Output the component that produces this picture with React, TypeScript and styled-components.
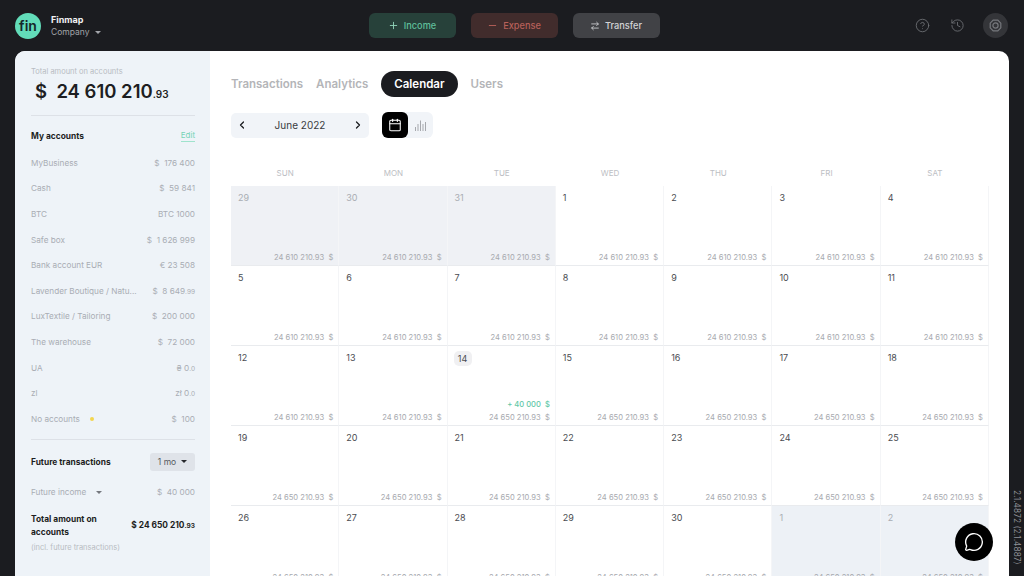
import * as React from 'react';
import styled, { createGlobalStyle } from 'styled-components';
import {
  ArrowRightLeft,
  Calendar as CalendarIcon,
  ChevronLeft,
  ChevronRight,
  CircleHelp,
  History,
  MessageCircle,
  Minus,
  Plus,
} from 'lucide-react';

const GlobalStyle = createGlobalStyle`
  html, body {
    margin: 0;
    padding: 0;
    height: 576px;
    overflow: hidden;
    background: #1b1c20;
    font-family: Inter, "Liberation Sans", sans-serif;
  }
  * { box-sizing: border-box; }
`;

const Page = styled.div`
  position: relative;
  width: 1024px;
  height: 576px;
  overflow: hidden;
  display: flex;
  flex-direction: column;
  background: #1b1c20;
`;

const TopBar = styled.header`
  height: 51px;
  flex: none;
  display: grid;
  grid-template-columns: 1fr auto 1fr;
  align-items: center;
  padding: 0 16px 0 20px;
`;

const Brand = styled.div`
  display: flex;
  align-items: center;
  gap: 10px;
  margin-left: -5px;
`;

const Logo = styled.div`
  width: 26px;
  height: 26px;
  border-radius: 50%;
  background: #62dcb9;
  color: #14262a;
  font-size: 14px;
  font-weight: 600;
  display: flex;
  align-items: center;
  justify-content: center;
`;

const BrandText = styled.div`
  padding-top: 2px;
`;

const BrandName = styled.div`
  color: #f1f1f3;
  font-size: 9px;
  font-weight: 700;
  line-height: 12px;
`;

const BrandCompany = styled.div`
  color: #a2a4a9;
  font-size: 8.5px;
  line-height: 13px;
  display: flex;
  align-items: center;
  gap: 5px;
`;

const Caret = styled.span<{ $color?: string }>`
  width: 0;
  height: 0;
  border-left: 3px solid transparent;
  border-right: 3px solid transparent;
  border-top: 3.5px solid ${(p) => p.$color ?? '#a2a4a9'};
`;

const Actions = styled.div`
  display: flex;
  gap: 15px;
`;

const ActionButton = styled.button<{ $bg: string; $fg: string }>`
  width: 87px;
  height: 25px;
  border: none;
  border-radius: 6px;
  background: ${(p) => p.$bg};
  color: ${(p) => p.$fg};
  font-family: inherit;
  font-size: 9.2px;
  font-weight: 500;
  display: flex;
  align-items: center;
  justify-content: center;
  gap: 5px;
  padding: 0;
`;

const TopIcons = styled.div`
  display: flex;
  align-items: center;
  justify-content: flex-end;
  gap: 20px;
  color: #6e7075;
`;

const Avatar = styled.div`
  width: 25px;
  height: 25px;
  border-radius: 50%;
  background: #343539;
  display: flex;
  align-items: center;
  justify-content: center;
  margin-left: -2px;
`;

const Panel = styled.div`
  flex: 1;
  min-height: 0;
  margin: 0 15px;
  display: flex;
  border-radius: 10px 10px 0 0;
  overflow: hidden;
  background: #fff;
`;

const Sidebar = styled.aside`
  width: 195px;
  flex: none;
  background: #eef3f8;
  padding: 16px 15px 0 16px;
  color: #1d1e22;
`;

const TotalLabel = styled.div`
  color: #b8bcc2;
  font-size: 7.5px;
  line-height: 10px;
`;

const TotalValue = styled.div`
  font-size: 18.5px;
  font-weight: 600;
  line-height: 26px;
  margin: 1px 0 0 4px;
  display: flex;
  align-items: baseline;
  white-space: pre;
`;

const Cents = styled.span<{ $size: number }>`
  font-size: ${(p) => p.$size}px;
`;

const Divider = styled.div<{ $top: number; $bottom: number }>`
  height: 1px;
  background: #dde1e7;
  margin: ${(p) => p.$top}px 0 ${(p) => p.$bottom}px;
`;

const SectionHead = styled.div`
  display: flex;
  align-items: center;
  justify-content: space-between;
  height: 14px;
  margin-bottom: 7px;
`;

const SectionTitle = styled.div`
  font-size: 8.4px;
  font-weight: 700;
`;

const EditLink = styled.span`
  color: #75d3b6;
  font-size: 8px;
  line-height: 11px;
  border-bottom: 1px solid #9fe3cd;
`;

const AccountRow = styled.div`
  height: 25.6px;
  display: flex;
  align-items: center;
  justify-content: space-between;
  color: #a9adb4;
  font-size: 8.2px;
  white-space: nowrap;
`;

const AccountName = styled.span`
  display: flex;
  align-items: center;
  gap: 10px;
`;

const AccountValue = styled.span`
  white-space: pre;
`;

const Dot = styled.span`
  width: 4px;
  height: 4px;
  border-radius: 50%;
  background: #f3d64f;
`;

const Small = styled.span`
  font-size: 6.5px;
`;

const FutureHead = styled.div`
  display: flex;
  align-items: center;
  justify-content: space-between;
  height: 18px;
  margin-bottom: 9px;
`;

const RangeSelect = styled.div`
  width: 45px;
  height: 18px;
  border-radius: 3px;
  background: #dfe3e9;
  color: #55585e;
  font-size: 8.5px;
  display: flex;
  align-items: center;
  justify-content: center;
  gap: 5px;
`;

const GrandTotal = styled.div`
  display: flex;
  justify-content: space-between;
  align-items: center;
  margin-top: 8px;
  font-size: 8.4px;
  font-weight: 700;
  line-height: 13px;
`;

const GrandLabel = styled.div`
  width: 75px;
`;

const GrandValue = styled.div`
  white-space: pre;
`;

const InclNote = styled.div`
  color: #b8bcc2;
  font-size: 7.5px;
  line-height: 10px;
  margin-top: 4px;
`;

const Main = styled.main`
  flex: 1;
  min-width: 0;
  padding: 20px 20px 0 21px;
`;

const Tabs = styled.nav`
  display: flex;
  align-items: center;
  gap: 13px;
  height: 26px;
`;

const Tab = styled.div<{ $active?: boolean }>`
  font-size: 11.5px;
  font-weight: 600;
  color: ${(p) => (p.$active ? '#fff' : '#b4b5b8')};
  background: ${(p) => (p.$active ? '#1b1c20' : 'transparent')};
  height: 26px;
  line-height: 26px;
  border-radius: 13px;
  padding: ${(p) => (p.$active ? '0 13px' : '0')};
`;

const Controls = styled.div`
  display: flex;
  align-items: center;
  gap: 13px;
  margin-top: 15px;
  height: 26px;
`;

const MonthPicker = styled.div`
  width: 138px;
  height: 25px;
  border-radius: 5px;
  background: #f1f4f8;
  color: #3a3c41;
  font-size: 10px;
  display: flex;
  align-items: center;
  justify-content: space-between;
  padding: 0 5px;
`;

const ViewToggle = styled.div`
  display: flex;
  border-radius: 6px;
  background: #f1f4f8;
`;

const ViewButton = styled.div<{ $active?: boolean }>`
  width: ${(p) => (p.$active ? 26 : 25)}px;
  height: 26px;
  border-radius: 6px;
  background: ${(p) => (p.$active ? '#000' : 'transparent')};
  color: ${(p) => (p.$active ? '#fff' : '#a6a8ad')};
  display: flex;
  align-items: center;
  justify-content: center;
`;

const Weekdays = styled.div`
  display: grid;
  grid-template-columns: repeat(7, 1fr);
  width: 758px;
  margin-top: 22px;
  height: 26px;
`;

const Weekday = styled.div`
  color: #bcbec3;
  font-size: 8px;
  text-align: center;
  line-height: 26px;
`;

const Grid = styled.div`
  display: grid;
  grid-template-columns: repeat(7, 1fr);
  grid-auto-rows: 80px;
  width: 758px;
`;

const tones = { current: '#fff', previous: '#eff1f5', next: '#edf1f6' };

const Cell = styled.div<{ $tone: keyof typeof tones }>`
  display: flex;
  flex-direction: column;
  padding: 5px 5px 1px 7px;
  background: ${(p) => tones[p.$tone]};
  border-right: 1px solid #f4f5f7;
  border-bottom: 1px solid #e9ebee;
`;

const DayNumber = styled.div<{ $muted?: boolean; $today?: boolean }>`
  color: ${(p) => (p.$muted ? '#a9adb3' : '#4a4c51')};
  font-size: 9px;
  line-height: ${(p) => (p.$today ? '15px' : '13px')};
  width: ${(p) => (p.$today ? '18px' : 'auto')};
  background: ${(p) => (p.$today ? '#f0f0f2' : 'transparent')};
  border-radius: 5px;
  text-align: ${(p) => (p.$today ? 'center' : 'left')};
  margin: ${(p) => (p.$today ? '0 0 0 -1px' : '0')};
`;

const CellFoot = styled.div`
  margin-top: auto;
  text-align: right;
  font-size: 7.6px;
  line-height: 13px;
  color: #a8aaaf;
  white-space: pre;
`;

const Income = styled.div`
  color: #63c8a8;
  font-weight: 500;
`;

const Version = styled.div`
  position: absolute;
  right: 2px;
  top: 490px;
  writing-mode: vertical-rl;
  color: #8f9196;
  font-size: 8.4px;
  white-space: nowrap;
`;

const ChatButton = styled.div`
  position: absolute;
  left: 955px;
  top: 523px;
  width: 38px;
  height: 38px;
  border-radius: 50%;
  background: #000;
  color: #fff;
  display: flex;
  align-items: center;
  justify-content: center;
`;

const accounts: [string, React.ReactNode][] = [
  ['MyBusiness', '$  176 400'],
  ['Cash', '$  59 841'],
  ['BTC', 'BTC 1000'],
  ['Safe box', '$  1 626 999'],
  ['Bank account EUR', '€ 23 508'],
  ['Lavender Boutique / Natu...', <>$  8 649<Small>.99</Small></>],
  ['LuxTextile / Tailoring', '$  200 000'],
  ['The warehouse', '$  72 000'],
  ['UA', <>₴ 0<Small>.0</Small></>],
  ['zl', <>zł 0<Small>.0</Small></>],
];

type Day = {
  n: number;
  tone: keyof typeof tones;
  today?: boolean;
  income?: string;
  balance: string;
};

const B1 = '24 610 210.93  $';
const B2 = '24 650 210.93  $';

const days: Day[] = [
  ...[29, 30, 31].map((n): Day => ({ n, tone: 'previous', balance: B1 })),
  ...[1, 2, 3, 4, 5, 6, 7, 8, 9, 10, 11, 12, 13].map((n): Day => ({ n, tone: 'current', balance: B1 })),
  { n: 14, tone: 'current', today: true, income: '+ 40 000  $', balance: B2 },
  ...[15, 16, 17, 18, 19, 20, 21, 22, 23, 24, 25, 26, 27, 28, 29, 30].map(
    (n): Day => ({ n, tone: 'current', balance: B2 }),
  ),
  ...[1, 2].map((n): Day => ({ n, tone: 'next', balance: B2 })),
];

const weekdays = ['SUN', 'MON', 'TUE', 'WED', 'THU', 'FRI', 'SAT'];

const BarsIcon = () => (
  <svg width="13" height="13" viewBox="0 0 13 13" fill="none" stroke="currentColor" strokeWidth="1">
    <path d="M1.5 12V8M4 12V5M6.5 12V1.5M9 12V5M11.5 12V3" />
  </svg>
);

const CogIcon = () => (
  <svg width="13" height="13" viewBox="0 0 13 13" fill="none" stroke="#76787d" strokeWidth="1.2">
    <path d="M4.2 1.2h4.6l3 3v4.6l-3 3H4.2l-3-3V4.2z" />
    <circle cx="6.5" cy="6.5" r="2.6" />
  </svg>
);

const App: React.FC = () => {
  return (
    <Page>
      <GlobalStyle />
      <TopBar>
        <Brand>
          <Logo>fin</Logo>
          <BrandText>
            <BrandName>Finmap</BrandName>
            <BrandCompany>
              Company <Caret />
            </BrandCompany>
          </BrandText>
        </Brand>
        <Actions>
          <ActionButton $bg="#27413a" $fg="#5fbf9b">
            <Plus size={11} color="#8fd3b8" />
            Income
          </ActionButton>
          <ActionButton $bg="#412c2c" $fg="#b8605a">
            <Minus size={11} color="#b8605a" />
            Expense
          </ActionButton>
          <ActionButton $bg="#414246" $fg="#d3d4d7">
            <ArrowRightLeft size={10} />
            Transfer
          </ActionButton>
        </Actions>
        <TopIcons>
          <CircleHelp size={15} strokeWidth={1.4} />
          <History size={15} strokeWidth={1.4} />
          <Avatar>
            <CogIcon />
          </Avatar>
        </TopIcons>
      </TopBar>
      <Panel>
        <Sidebar>
          <TotalLabel>Total amount on accounts</TotalLabel>
          <TotalValue>
            ${'  '}24 610 210<Cents $size={10}>.93</Cents>
          </TotalValue>
          <Divider $top={8} $bottom={13} />
          <SectionHead>
            <SectionTitle>My accounts</SectionTitle>
            <EditLink>Edit</EditLink>
          </SectionHead>
          {accounts.map(([name, value]) => (
            <AccountRow key={name}>
              <span>{name}</span>
              <AccountValue>{value}</AccountValue>
            </AccountRow>
          ))}
          <AccountRow>
            <AccountName>
              No accounts <Dot />
            </AccountName>
            <AccountValue>{'$  100'}</AccountValue>
          </AccountRow>
          <Divider $top={7} $bottom={13} />
          <FutureHead>
            <SectionTitle>Future transactions</SectionTitle>
            <RangeSelect>
              1 mo <Caret $color="#26282c" />
            </RangeSelect>
          </FutureHead>
          <AccountRow>
            <AccountName>
              Future income <Caret $color="#75787e" />
            </AccountName>
            <AccountValue>{'$  40 000'}</AccountValue>
          </AccountRow>
          <GrandTotal>
            <GrandLabel>Total amount on accounts</GrandLabel>
            <GrandValue>
              {'$ 24 650 210'}
              <Cents $size={6.5}>.93</Cents>
            </GrandValue>
          </GrandTotal>
          <InclNote>(incl. future transactions)</InclNote>
        </Sidebar>
        <Main>
          <Tabs>
            <Tab>Transactions</Tab>
            <Tab>Analytics</Tab>
            <Tab $active>Calendar</Tab>
            <Tab>Users</Tab>
          </Tabs>
          <Controls>
            <MonthPicker>
              <ChevronLeft size={12} strokeWidth={2.6} color="#1b1c20" />
              June 2022
              <ChevronRight size={12} strokeWidth={2.6} color="#1b1c20" />
            </MonthPicker>
            <ViewToggle>
              <ViewButton $active>
                <CalendarIcon size={14} strokeWidth={1.8} />
              </ViewButton>
              <ViewButton>
                <BarsIcon />
              </ViewButton>
            </ViewToggle>
          </Controls>
          <Weekdays>
            {weekdays.map((d) => (
              <Weekday key={d}>{d}</Weekday>
            ))}
          </Weekdays>
          <Grid>
            {days.map((d, i) => (
              <Cell key={i} $tone={d.tone}>
                <DayNumber $muted={d.tone !== 'current'} $today={d.today}>
                  {d.n}
                </DayNumber>
                <CellFoot>
                  {d.income && <Income>{d.income}</Income>}
                  <div>{d.balance}</div>
                </CellFoot>
              </Cell>
            ))}
          </Grid>
        </Main>
      </Panel>
      <Version>2.1.4872 (2.1.4887)</Version>
      <ChatButton>
        <MessageCircle size={20} strokeWidth={1.6} />
      </ChatButton>
    </Page>
  );
};

export default App;
